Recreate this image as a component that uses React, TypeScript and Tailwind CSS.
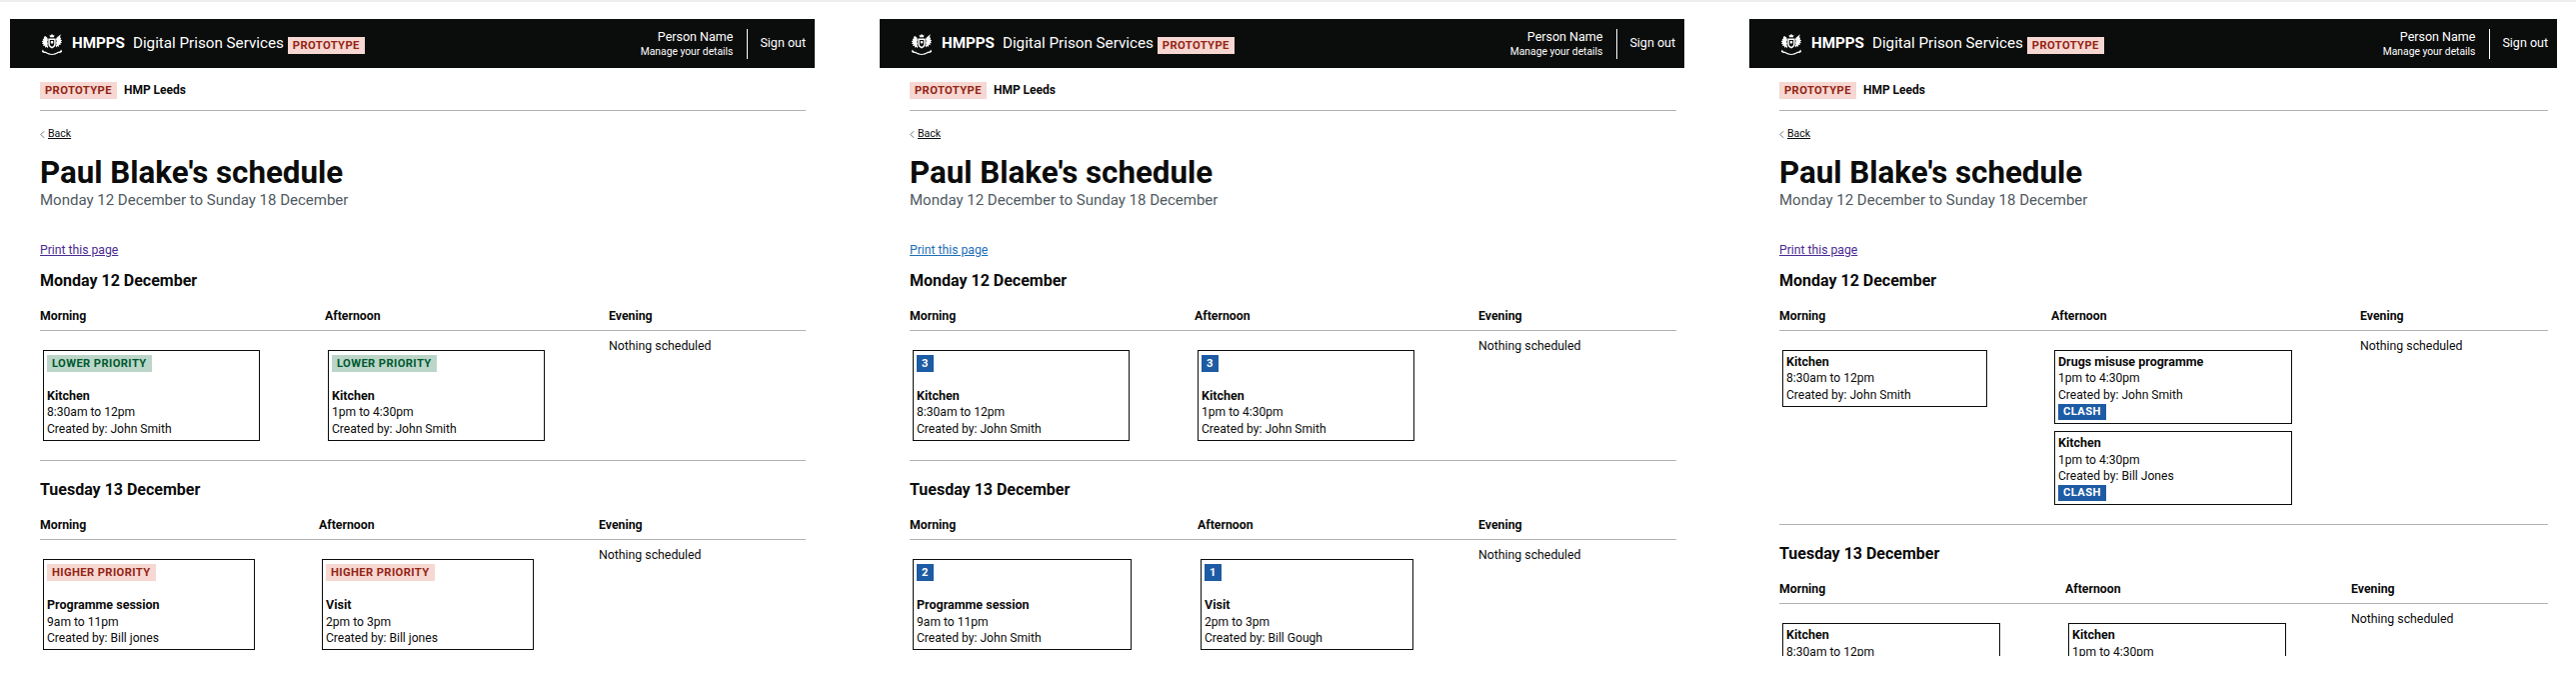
type Entry = {
  title: string;
  time: string;
  by: string;
  tag?: string;
  clash?: boolean;
  width: string;
};

type Day = {
  name: string;
  cols: string;
  morning: Entry[];
  afternoon: Entry[];
};

type Panel = {
  width: string;
  contentPr: string;
  link: string;
  days: Day[];
};

const panels: Panel[] = [
  {
    width: "w-[805px]",
    contentPr: "pr-[9px]",
    link: "text-[#4c2c92] decoration-[#4c2c92]",
    days: [
      {
        name: "Monday 12 December",
        cols: "grid-cols-[285px_284px_1fr]",
        morning: [{ title: "Kitchen", time: "8:30am to 12pm", by: "John Smith", tag: "lower", width: "w-[217px]" }],
        afternoon: [{ title: "Kitchen", time: "1pm to 4:30pm", by: "John Smith", tag: "lower", width: "w-[217px]" }],
      },
      {
        name: "Tuesday 13 December",
        cols: "grid-cols-[279px_280px_1fr]",
        morning: [{ title: "Programme session", time: "9am to 11pm", by: "Bill jones", tag: "higher", width: "w-[212px]" }],
        afternoon: [{ title: "Visit", time: "2pm to 3pm", by: "Bill jones", tag: "higher", width: "w-[212px]" }],
      },
    ],
  },
  {
    width: "w-[805px]",
    contentPr: "pr-[8px]",
    link: "text-[#1d70b8] decoration-[#1d70b8]",
    days: [
      {
        name: "Monday 12 December",
        cols: "grid-cols-[285px_284px_1fr]",
        morning: [{ title: "Kitchen", time: "8:30am to 12pm", by: "John Smith", tag: "3", width: "w-[217px]" }],
        afternoon: [{ title: "Kitchen", time: "1pm to 4:30pm", by: "John Smith", tag: "3", width: "w-[217px]" }],
      },
      {
        name: "Tuesday 13 December",
        cols: "grid-cols-[288px_281px_1fr]",
        morning: [{ title: "Programme session", time: "9am to 11pm", by: "John Smith", tag: "2", width: "w-[219px]" }],
        afternoon: [{ title: "Visit", time: "2pm to 3pm", by: "Bill Gough", tag: "1", width: "w-[213px]" }],
      },
    ],
  },
  {
    width: "w-[808px]",
    contentPr: "pr-[9px]",
    link: "text-[#4c2c92] decoration-[#4c2c92]",
    days: [
      {
        name: "Monday 12 December",
        cols: "grid-cols-[272px_309px_1fr]",
        morning: [{ title: "Kitchen", time: "8:30am to 12pm", by: "John Smith", width: "w-[205px]" }],
        afternoon: [
          { title: "Drugs misuse programme", time: "1pm to 4:30pm", by: "John Smith", clash: true, width: "w-[238px]" },
          { title: "Kitchen", time: "1pm to 4:30pm", by: "Bill Jones", clash: true, width: "w-[238px]" },
        ],
      },
      {
        name: "Tuesday 13 December",
        cols: "grid-cols-[286px_286px_1fr]",
        morning: [{ title: "Kitchen", time: "8:30am to 12pm", by: "John Smith", width: "w-[218px]" }],
        afternoon: [{ title: "Kitchen", time: "1pm to 4:30pm", by: "John Smith", width: "w-[218px]" }],
      },
    ],
  },
];

function Crest() {
  return (
    <svg viewBox="0 0 24 22" className="w-[24px] h-[22px] shrink-0" fill="white">
      {/* crown */}
      <path d="M10 4.2 9.600 1.800l1.300.8L12 .8l1.100 1.800 1.300-.8-.4 2.400z" />
      {/* shield */}
      <path fillRule="evenodd" d="M8.300 5.500h7.400v5.300c0 2.600-1.700 4-3.700 4.800-2-.8-3.700-2.200-3.700-4.800zM9.800 7v3.700c0 1.600 1 2.500 2.200 3.100 1.200-.6 2.200-1.500 2.200-3.100V7z" />
      <path d="M10.800 8h2.400v2.400h-2.400z" />
      {/* lion */}
      <path d="M7.400 4.800 5.200 3 3.800 4l.5 1.400L2.600 6l.9 1.300-1.800 1 1.400 1.100-1.200 1.400 1.800.4-.6 1.800 1.900-.3.200 2.100 1.500-1 1 1.500.6-1.900-1-1.100.6-1.500-.7-2 .7-1.500z" />
      {/* unicorn */}
      <path d="m16.600 4.800 1.500-1.300 2.800-2.300-1 3 1.300.9-.7 1.300 1.700 1-1.400 1.100 1.200 1.400-1.800.4.600 1.800-1.900-.3-.2 2.100-1.500-1-1 1.500-.6-1.900 1-1.100-.6-1.500.7-2-.7-1.500z" />
      {/* motto */}
      <path d="M2.800 16.400c.8 1.800 2 2.500 3.300 2.300 2 1.400 3.800 2.200 5.900 2.200s3.900-.8 5.900-2.200c1.300.2 2.500-.5 3.300-2.300l1 2.300c-1.100 1-2.400 1.500-3.700 1.400-2.100 1.300-4.200 1.900-6.500 1.900s-4.400-.6-6.500-1.900c-1.300.1-2.600-.4-3.700-1.400z" />
    </svg>
  );
}

function Tag({ tag }: { tag: string }) {
  if (tag === "lower") {
    return <span className="inline-block h-[17px] px-[5px] bg-[#bbd6c9] text-[#005a30] text-[11.2px] leading-[17px] font-bold tracking-[0.4px]">LOWER PRIORITY</span>;
  }
  if (tag === "higher") {
    return <span className="inline-block h-[17px] px-[5px] bg-[#f6d7d2] text-[#942514] text-[11.2px] leading-[17px] font-bold tracking-[0.4px]">HIGHER PRIORITY</span>;
  }
  return <span className="inline-block h-[17px] px-[5px] bg-[#1d5ca4] text-white text-[11.2px] leading-[17px] font-bold tracking-[0.4px]">{tag}</span>;
}

function Card({ entry }: { entry: Entry }) {
  return (
    <div className={`${entry.width} ml-[3px] border border-[#0b0c0c] px-[3px] pt-[3px] pb-[3px] text-[12.1px] leading-[16.4px] text-[#0b0c0c]`}>
      {entry.tag && (
        <div className="h-[34px] pt-px">
          <Tag tag={entry.tag} />
        </div>
      )}
      <p className="font-bold text-[12.5px]">{entry.title}</p>
      <p>{entry.time}</p>
      <p>Created by: {entry.by}</p>
      {entry.clash && (
        <span className="block w-fit mt-px h-[16px] px-[5px] bg-[#1d5ca4] text-white text-[11.2px] leading-[16px] font-bold tracking-[0.4px]">CLASH</span>
      )}
    </div>
  );
}

function DaySection({ day }: { day: Day }) {
  return (
    <section>
      <h2 className="text-[16px] leading-[22px] font-bold text-[#0b0c0c] mb-[14px]">{day.name}</h2>
      <div className={`grid ${day.cols} h-[25px] border-b border-[#b1b4b6] text-[12.3px] font-bold leading-[20px] text-[#0b0c0c]`}>
        <span>Morning</span>
        <span>Afternoon</span>
        <span>Evening</span>
      </div>
      <div className={`grid ${day.cols} pb-[19px] border-b border-[#b1b4b6] pt-[5px] text-[12.3px] leading-[20px] text-[#0b0c0c]`}>
        <div className="flex flex-col gap-[7px] pt-[14px]">
          {day.morning.map((e, i) => (
            <Card key={i} entry={e} />
          ))}
        </div>
        <div className="flex flex-col gap-[7px] pt-[14px]">
          {day.afternoon.map((e, i) => (
            <Card key={i} entry={e} />
          ))}
        </div>
        <p>Nothing scheduled</p>
      </div>
    </section>
  );
}

function PanelView({ panel }: { panel: Panel }) {
  return (
    <div className={`${panel.width} h-[637px] overflow-hidden`}>
      <header className="flex items-center h-[49px] bg-[#0b0c0c] text-white pl-[30px] pr-[9px]">
        <Crest />
        <span className="ml-[8px] text-[15.2px] font-bold">HMPPS</span>
        <span className="ml-[8px] text-[15.2px]">Digital Prison Services</span>
        <span className="ml-[4px] mt-[3px] h-[17px] px-[5px] bg-[#f6d7d2] text-[#942514] text-[11.2px] leading-[17px] font-bold tracking-[0.4px]">PROTOTYPE</span>
        <div className="ml-auto flex flex-col items-end pr-[14px] border-r border-white h-[30px]">
          <span className="text-[12.5px] leading-[16px]">Person Name</span>
          <span className="text-[10.3px] leading-[14px]">Manage your details</span>
        </div>
        <span className="ml-[12px] text-[12.5px]">Sign out</span>
      </header>
      <div className={`pl-[30px] ${panel.contentPr}`}>
        <div className="flex items-center gap-[7px] h-[43px] pt-[2px] border-b border-[#b1b4b6]">
          <span className="h-[17px] px-[5px] bg-[#f6d7d2] text-[#942514] text-[11.2px] leading-[17px] font-bold tracking-[0.4px]">PROTOTYPE</span>
          <span className="text-[12px] font-bold text-[#0b0c0c]">HMP Leeds</span>
        </div>
        <div className="flex items-center gap-[3px] mt-[16px] text-[10.5px] leading-[14px] text-[#0b0c0c]">
          <svg viewBox="0 0 6 10" className="w-[5px] h-[9px]" fill="none" stroke="#505a5f" strokeWidth={1}>
            <path d="M5 1 1 5l4 4" />
          </svg>
          <a className="underline">Back</a>
        </div>
        <h1 className="mt-[15px] text-[31.3px] leading-[34px] font-bold text-[#0b0c0c]">Paul Blake's schedule</h1>
        <p className="text-[15px] leading-[20px] text-[#505a5f]">Monday 12 December to Sunday 18 December</p>
        <a className={`block mt-[31px] text-[12.2px] leading-[18px] underline ${panel.link}`}>Print this page</a>
        <div className="mt-[11px]">
          <DaySection day={panel.days[0]} />
          <div className="mt-[18px]">
            <DaySection day={panel.days[1]} />
          </div>
        </div>
      </div>
    </div>
  );
}

export default function App() {
  return (
    <div className="h-[674px] overflow-hidden bg-white font-['Roboto','Liberation_Sans',sans-serif] border-t-2 border-[#eeeeee]">
      <div className="flex gap-[65px] pl-[10px] pt-[17px]">
        {panels.map((p, i) => (
          <PanelView key={i} panel={p} />
        ))}
      </div>
    </div>
  );
}
